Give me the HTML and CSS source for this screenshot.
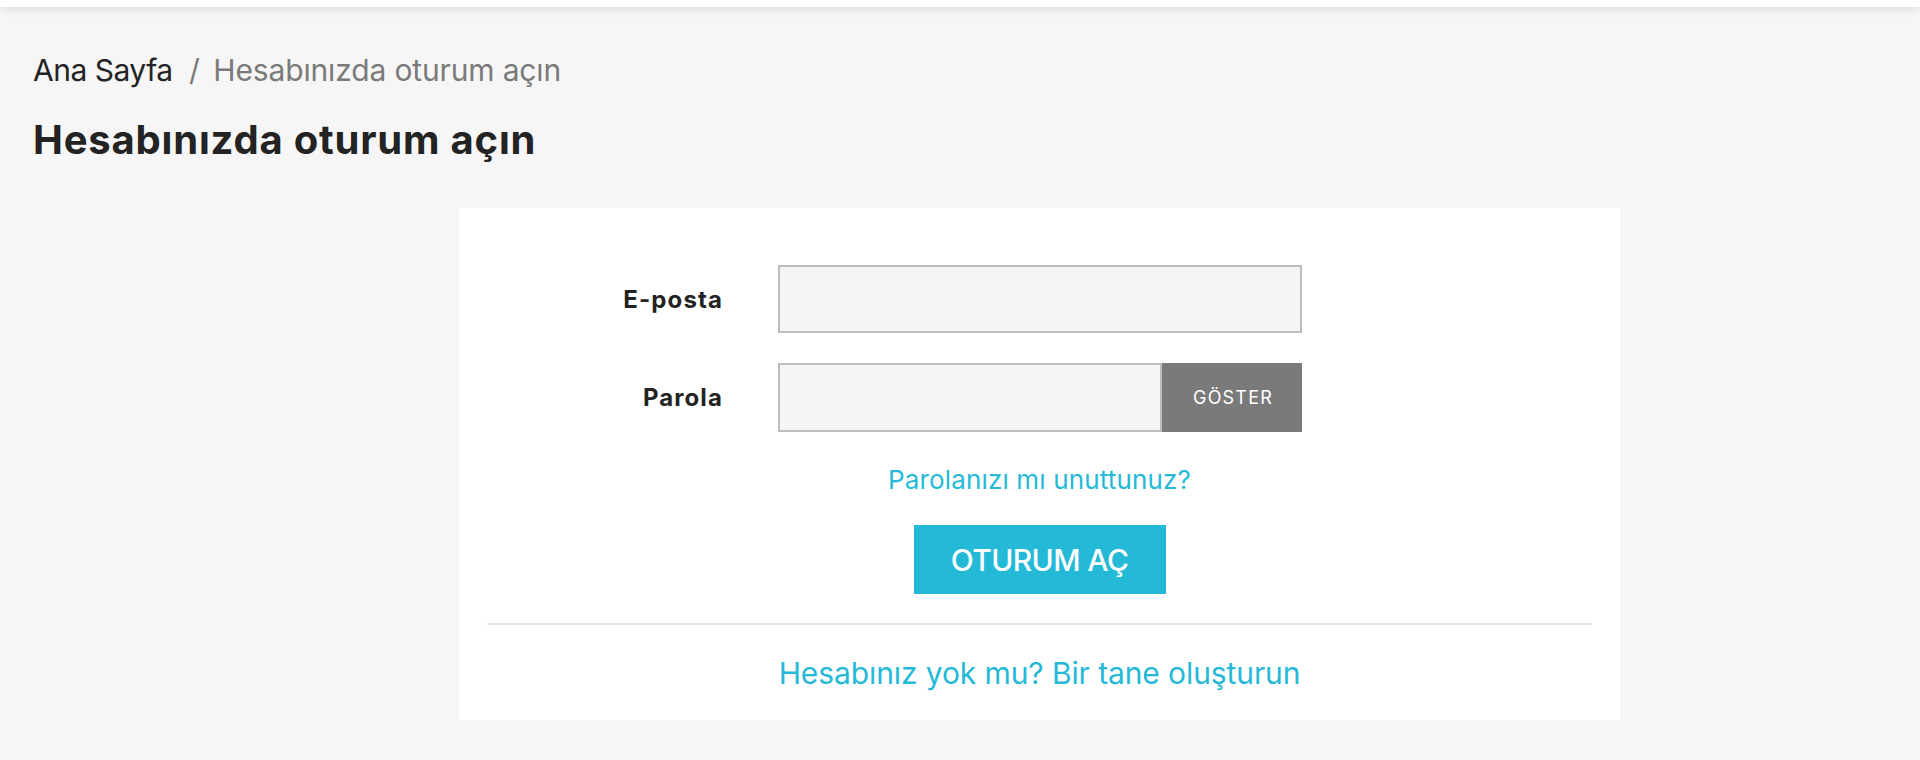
FILE: index.html
```html
<!DOCTYPE html>
<html lang="tr">
<head>
    <meta charset="UTF-8">
    <meta name="viewport" content="width=device-width, initial-scale=1.0">
    <title>Hesabınızda oturum açın</title>
    <link rel="stylesheet" href="styles.css">
</head>
<body>
    <header class="site-header"></header>

    <main class="page">
        <nav class="breadcrumb">
            <a href="#" class="crumb-home">Ana Sayfa</a>
            <span class="crumb-sep">/</span>
            <span class="crumb-current">Hesabınızda oturum açın</span>
        </nav>

        <h1 class="page-title">Hesabınızda oturum açın</h1>

        <section class="login-card">
            <form class="login-form" onsubmit="return false;">
                <div class="form-row">
                    <label for="email">E-posta</label>
                    <input type="email" id="email" class="field">
                </div>

                <div class="form-row">
                    <label for="password">Parola</label>
                    <div class="input-group">
                        <input type="password" id="password" class="field">
                        <button type="button" class="show-btn" id="toggle">GÖSTER</button>
                    </div>
                </div>

                <a href="#" class="forgot-link">Parolanızı mı unuttunuz?</a>

                <button type="submit" class="submit-btn">OTURUM AÇ</button>
            </form>

            <hr class="divider">

            <a href="#" class="register-link">Hesabınız yok mu? Bir tane oluşturun</a>
        </section>
    </main>

    <script>
        document.getElementById('toggle').addEventListener('click', function() {
            const pwd = document.getElementById('password');
            if (pwd.type === 'password') {
                pwd.type = 'text';
                this.textContent = 'GİZLE';
            } else {
                pwd.type = 'password';
                this.textContent = 'GÖSTER';
            }
        });
    </script>
</body>
</html>
```

FILE: styles.css
```css
body {
    font-family: 'Inter', 'Noto Sans', sans-serif;
    background: #f6f6f6;
    color: #232323;
    margin: 0;
    padding: 0;
}

a {
    text-decoration: none;
}

.site-header {
    height: 7px;
    background: #ffffff;
    box-shadow: 0 2px 8px rgba(0, 0, 0, 0.12);
}

.page {
    padding: 41px 33px 0;
}

.breadcrumb {
    font-size: 30px;
    line-height: 45px;
    color: #7a7a7a;
}

.crumb-home {
    color: #232323;
    letter-spacing: -0.5px;
}

.crumb-sep {
    margin: 0 5px 0 8px;
}

.crumb-current {
    letter-spacing: -0.15px;
}

.page-title {
    font-size: 40px;
    line-height: 48px;
    font-weight: 700;
    letter-spacing: 0.8px;
    margin: 23px 0 0;
}

.login-card {
    background: #ffffff;
    width: 1161px;
    margin: 44px 0 0 426px;
    padding: 57px 28px 27px;
    box-sizing: border-box;
    display: flex;
    flex-direction: column;
    align-items: center;
}

.login-form {
    display: flex;
    flex-direction: column;
    align-items: center;
    width: 100%;
}

.form-row {
    display: grid;
    grid-template-columns: 235px 524px;
    column-gap: 56px;
    align-items: center;
    align-self: flex-start;
    margin-bottom: 30px;
}

.form-row:nth-child(2) {
    margin-bottom: 28px;
}

.form-row label {
    text-align: right;
    font-size: 24px;
    font-weight: 700;
    letter-spacing: 1.1px;
    margin-right: -1px;
}

.field {
    height: 68px;
    box-sizing: border-box;
    border: 2px solid #bdbdbd;
    background: #f5f5f5;
    font-family: inherit;
    font-size: 22px;
    padding: 0 14px;
    outline: none;
    width: 100%;
}

.input-group {
    display: flex;
    height: 69px;
}

.input-group .field {
    height: 69px;
    flex: 1;
    min-width: 0;
}

.show-btn {
    width: 140px;
    flex: none;
    border: none;
    background: #7a7a7a;
    color: #ffffff;
    font-family: inherit;
    font-size: 18px;
    letter-spacing: 1.2px;
    padding: 0 0 0 2px;
    cursor: pointer;
}

.forgot-link {
    color: #24b9d7;
    font-size: 26px;
    line-height: 39px;
    letter-spacing: 0.15px;
    margin-bottom: 26px;
}

.submit-btn {
    width: 252px;
    height: 69px;
    border: none;
    background: #24b9d7;
    color: #ffffff;
    font-family: inherit;
    font-size: 30px;
    font-weight: 500;
    letter-spacing: -0.6px;
    cursor: pointer;
}

.divider {
    width: 100%;
    border: none;
    border-top: 2px solid #e5e5e5;
    margin: 29px 0 29px;
}

.register-link {
    color: #24b9d7;
    font-size: 30px;
    line-height: 39px;
    letter-spacing: -0.1px;
}
```
